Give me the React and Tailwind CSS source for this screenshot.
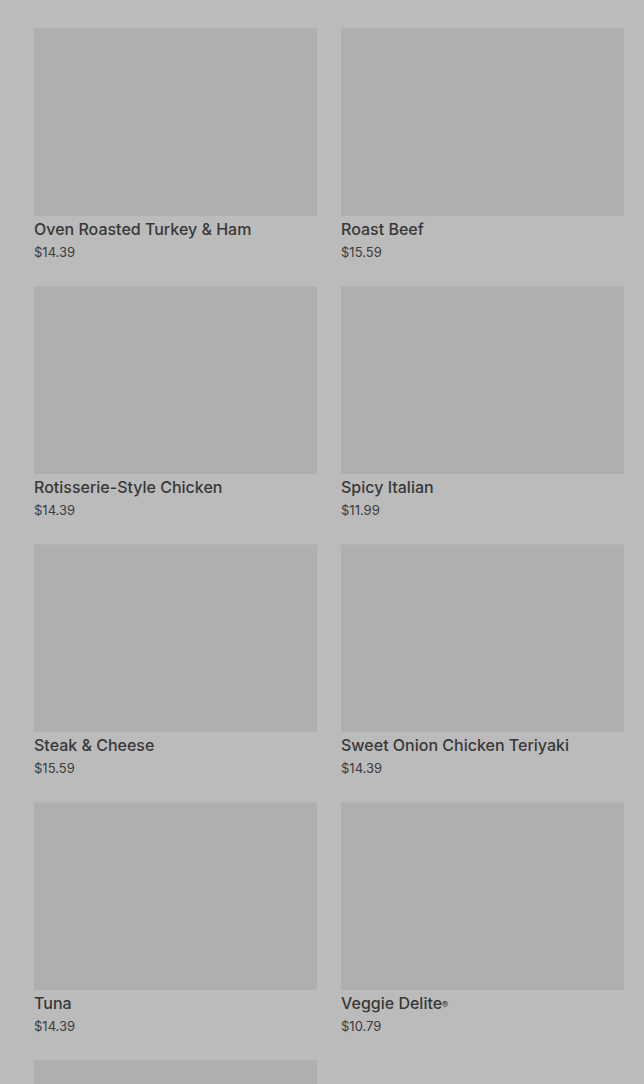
import React from "react";

const items = [
  ["Oven Roasted Turkey & Ham", "$14.39"],
  ["Roast Beef", "$15.59"],
  ["Rotisserie-Style Chicken", "$14.39"],
  ["Spicy Italian", "$11.99"],
  ["Steak & Cheese", "$15.59"],
  ["Sweet Onion Chicken Teriyaki", "$14.39"],
  ["Tuna", "$14.39"],
  ["Veggie Delite", "$10.79", true],
  ["", ""],
];

export default function App() {
  return (
    <div className="h-[1084px] w-[644px] bg-[#bbbbbb] pl-[34px] pr-[20px] pt-[28px] overflow-hidden font-['Inter',sans-serif]">
      <div className="grid grid-cols-2 gap-x-[24px] gap-y-[23px]">
        {items.map(([name, price, reg], i) => (
          <div key={i} className="flex flex-col h-[235px]">
            <div className="h-[188px] shrink-0 w-full bg-[#afafaf] border-t border-[#b4b4b4]" />
            <div className="h-[23px] shrink-0 flex items-end text-[16px] leading-[20px] font-medium text-[#383838]">
              <span>
                {name}
                {reg && <sup className="text-[9px] relative -top-[1px]">®</sup>}
              </span>
            </div>
            <div className="h-[24px] shrink-0 pt-[3px] flex items-center text-[13px] text-[#3c3c3c]">
              {price}
            </div>
          </div>
        ))}
      </div>
    </div>
  );
}
